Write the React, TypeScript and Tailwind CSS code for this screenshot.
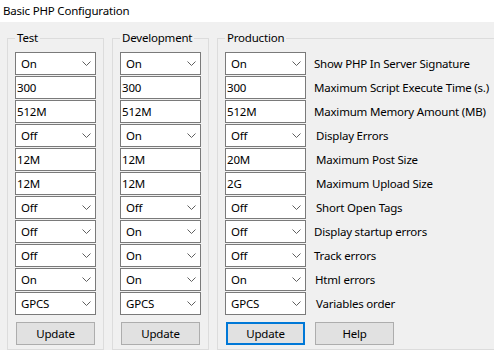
import React from 'react';

type Row = {
  label: string;
  kind: 'select' | 'input';
  values: [string, string, string];
  indent?: string;
};

const rows: Row[] = [
  { label: 'Show PHP In Server Signature', kind: 'select', values: ['On', 'On', 'On'] },
  { label: 'Maximum Script Execute Time (s.)', kind: 'input', values: ['300', '300', '300'] },
  { label: 'Maximum Memory Amount (MB)', kind: 'input', values: ['512M', '512M', '512M'] },
  { label: 'Display Errors', kind: 'select', values: ['Off', 'On', 'Off'], indent: 'pl-[2px]' },
  { label: 'Maximum Post Size', kind: 'input', values: ['12M', '12M', '20M'], indent: 'pl-[2px]' },
  { label: 'Maximum Upload Size', kind: 'input', values: ['12M', '12M', '2G'], indent: 'pl-[2px]' },
  { label: 'Short Open Tags', kind: 'select', values: ['Off', 'Off', 'Off'], indent: 'pl-[2px]' },
  { label: 'Display startup errors', kind: 'select', values: ['Off', 'On', 'Off'] },
  { label: 'Track errors', kind: 'select', values: ['Off', 'On', 'Off'] },
  { label: 'Html errors', kind: 'select', values: ['On', 'On', 'On'], indent: 'pl-px' },
  { label: 'Variables order', kind: 'select', values: ['GPCS', 'GPCS', 'GPCS'], indent: 'pl-[2px]' },
];

const Chevron = () => (
  <svg width="9" height="5" viewBox="0 0 9 5" className="shrink-0">
    <path d="M0.5 0.5 L4.5 4.5 L8.5 0.5" fill="none" stroke="#606060" strokeWidth="1" />
  </svg>
);

const Field: React.FC<{ row: Row; value: string }> = ({ row, value }) =>
  row.kind === 'select' ? (
    <div className="w-[81px] h-[23px] shrink-0 bg-white border border-[#7a7a7a] flex items-center justify-between pl-[5px] pr-[4px]">
      <span>{value}</span>
      <Chevron />
    </div>
  ) : (
    <input
      readOnly
      value={value}
      className="w-[81px] h-[23px] shrink-0 bg-white border border-[#7a7a7a] px-px outline-none text-black"
    />
  );

const Button: React.FC<{ label: string; focused?: boolean; className?: string }> = ({ label, focused, className }) => (
  <button
    className={`w-[79px] h-[23px] bg-[#e1e1e1] ${
      focused ? 'border-2 border-[#0078d7]' : 'border border-[#adadad]'
    } ${className ?? ''}`}
  >
    {label}
  </button>
);

// group box: the caption sits over the top border line
const Group: React.FC<{ title: string; col: number; wide?: boolean }> = ({ title, col, wide }) => (
  <div
    className={`relative border border-[#dcdcdc] h-[312px] px-[7px] pt-[13px] shrink-0 ${
      wide ? 'w-[300px]' : 'w-[97px]'
    }`}
  >
    <span className="absolute -top-[9px] left-[7px] px-[2px] leading-[16px] bg-[#f0f0f0]">{title}</span>
    <div className="flex flex-col gap-px">
      {rows.map((r) => (
        <div key={r.label} className="flex items-center">
          <Field row={r} value={r.values[col]} />
          {wide && <span className={`ml-[8px] whitespace-nowrap ${r.indent ?? ''}`}>{r.label}</span>}
        </div>
      ))}
    </div>
    <div className="mt-[7px] flex">
      <Button label="Update" focused={wide} className="ml-px" />
      {wide && <Button label="Help" className="ml-[10px]" />}
    </div>
  </div>
);

export default function App() {
  return (
    <div
      className="w-[494px] h-[350px] overflow-hidden bg-[#f0f0f0] text-[11.5px] tracking-[-0.2px] text-black"
      style={{ fontFamily: '"Noto Sans", "DejaVu Sans", sans-serif' }}
    >
      <div className="h-[22px] bg-white pl-[3px] leading-[21px]">Basic PHP Configuration</div>
      <div className="flex gap-[8px] pl-[7px] pt-[16px]">
        <Group title="Test" col={0} />
        <Group title="Development" col={1} />
        <Group title="Production" col={2} wide />
      </div>
    </div>
  );
}
